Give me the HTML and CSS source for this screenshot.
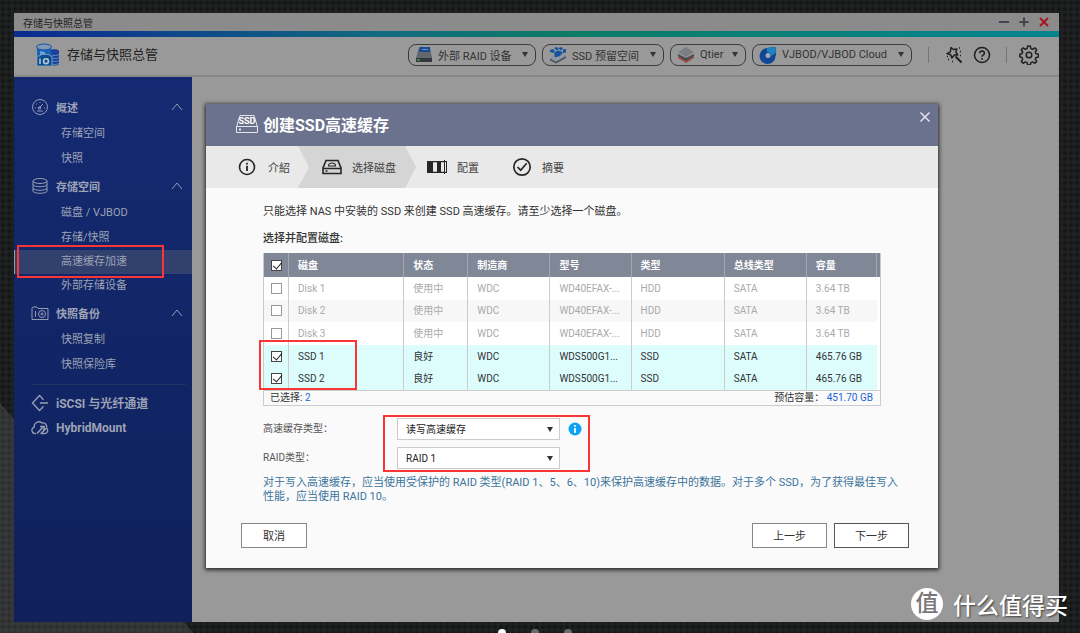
FILE: index.html
```html
<!DOCTYPE html>
<html lang="zh-CN">
<head>
<meta charset="utf-8">
<meta name="viewport" content="width=device-width, initial-scale=1">
<title>存储与快照总管</title>
<link rel="stylesheet" href="styles.css">
</head>
<body>
<div class="window">
  <div class="titlebar">
    <span class="titlebar-name">存储与快照总管</span>
    <button class="win-btn" aria-label="最小化"><svg width="10" height="10" viewBox="0 0 10 10"><path d="M0 5h10" stroke="#42454f" stroke-width="2"/></svg></button>
    <button class="win-btn" aria-label="最大化"><svg width="10" height="10" viewBox="0 0 10 10"><path d="M0.500 5h9M5 .5v9" stroke="#42454f" stroke-width="2"/></svg></button>
    <button class="win-btn" aria-label="关闭"><svg width="10" height="10" viewBox="0 0 10 10"><path d="M1 1l8 8M9 1L1 9" stroke="#a81420" stroke-width="2"/></svg></button>
  </div>
  <div class="stripe"></div>
  <header class="header">
    <svg class="app-logo" width="24" height="24" viewBox="0 0 24 24">
      <path d="M13 8c0-2.500 10-2.500 10 0v13c0 2-10 2-10 0z" fill="#1c3f9c"/>
      <path d="M16 12c3 .8 5 .5 7-.5M16 15c3 .8 5 .5 7-.5M16 18c3 .8 5 .5 7-.5M16 21c3 .8 5 .5 7-.5" stroke="#5d8fc4" fill="none"/>
      <path d="M1 4v9h14V4z" fill="#1763b8"/>
      <path d="M4 8v4h5V9z" fill="#6aa3cf"/>
      <ellipse cx="8" cy="4" rx="7.500" ry="3" fill="#8099b4" stroke="#1650ae"/>
      <path d="M1 13h3l1-1.500h8l1 1.500h2v10H1z" fill="#084f91" stroke="#8fa6ba" stroke-width=".8"/>
      <path d="M4 15.500v5.500" stroke="#b9c6d2" stroke-width="1.500"/><circle cx="10" cy="18.200" r="2.400" fill="none" stroke="#b9c6d2" stroke-width="1.600"/>
    </svg>
    <h1 class="app-name">存储与快照总管</h1>
    <nav class="tools">
      <button class="pill pill-raid">
        <svg width="18" height="18" viewBox="0 0 18 18"><path d="M4 1h11l2 11H1z" fill="#60676f"/><path d="M5 1h10v5H4z" fill="#174c94"/><path d="M7 3.500h6" stroke="#6d91ba"/><path d="M1 12h16v4H1z" fill="#33383e"/><path d="M2 14h3" stroke="#3a9a3d" stroke-width="1.500"/></svg>
        <span>外部 RAID 设备</span><i class="caret"></i></button>
      <button class="pill pill-ssd">
        <svg width="18" height="18" viewBox="0 0 18 18"><path d="M1 12.500l9-5 7 2.500v2l-10 5.500-6-3z" fill="#4b5661"/><path d="M1 12.500l9-5 7 2.500-10 5.500z" fill="#8f99a3"/><path d="M1 4l3-1 2 2-2 2-3-1zM5 2l3-1 2 2-2 1.500zM9.500 2l3-1 1.500 2-2.500 1.500zM14 3.500l3-.5v3.500l-3 .5zM5 6.500l4-2 5 1.500-3 4-5 1.500z" fill="#1254a0"/></svg>
        <span>SSD 预留空间</span><i class="caret"></i></button>
      <button class="pill pill-qtier">
        <svg width="18" height="18" viewBox="0 0 18 18"><path d="M1 10l8 4 8-4v2l-8 5-8-5z" fill="#a04d42"/><path d="M1 8l8 4 8-4v2l-8 5-8-5z" fill="#464b50"/><path d="M9 1l8 5-8 5-8-5z" fill="#7b7e82"/></svg>
        <span>Qtier</span><i class="caret"></i></button>
      <button class="pill pill-vjbod">
        <svg width="18" height="18" viewBox="0 0 18 18"><path d="M17 1c0 3 .5 6-.5 9.500A8 8 0 1 1 9 2c3-1 5-1 8-1z" fill="#124596"/><path d="M8 2.300C11 1 14 1 17 1c0 2-.2 4-.3 6l-4.700 3c0-3-2-4-4-4z" fill="#1d83bc"/><circle cx="9" cy="9.500" r="2.500" fill="#a0a8b0"/></svg>
        <span>VJBOD/VJBOD Cloud</span><i class="caret"></i></button>
      <span class="sep"></span>
      <button class="tool" aria-label="工具"><svg width="18" height="18" viewBox="0 0 18 18" fill="none" stroke="#1f1f1f" stroke-width="1.500" stroke-linejoin="round"><path d="M6 1.500l2.500 2 3.300-.6-.9 3.200 1.800 2.900-3.500.1-2.300 2.900-1.200-3.300L2 7.600l3.300-1.800z"/><path d="M10.500 10.500l6 6" stroke-width="2"/><path d="M14 2h1M15 5.500h1M15 9.500h1M3 13.500h1M7 15.500h1M2 10.500h1"/></svg></button>
      <button class="tool" aria-label="帮助"><svg width="18" height="18" viewBox="0 0 18 18" fill="none" stroke="#1f1f1f" stroke-width="1.500"><circle cx="9" cy="9" r="7.500"/><path d="M6.700 7.200c0-3 4.700-3 4.700 0 0 1.700-2.400 1.700-2.400 3.600M9 12v1.700"/></svg></button>
      <span class="sep"></span>
      <button class="tool tool-gear" aria-label="设置"><svg width="20" height="20" viewBox="0 0 20 20" fill="none" stroke="#1f1f1f" stroke-width="1.500" stroke-linejoin="round"><circle cx="10" cy="10" r="2.800"/><path d="M8.700 1h2.600l.6 2.600 1.700.7 2.200-1.400 1.900 1.900-1.400 2.200.7 1.700 2.500.6v2.600l-2.500.6-.7 1.700 1.400 2.200-1.900 1.900-2.200-1.400-1.700.7-.6 2.500H8.700l-.6-2.500-1.700-.7-2.200 1.400-1.900-1.900 1.400-2.200-.7-1.700L.8 11.900V9.300L3 8.700 3.700 7 2.300 4.800l1.900-1.900 2.200 1.400 1.700-.7z"/></svg></button>
    </nav>
  </header>
  <div class="body">
    <aside class="sidebar">
      <a class="group" href="#"><svg width="18" height="18" viewBox="0 0 18 18"><circle cx="9" cy="9" r="7.500"/><path d="M8 10l4-4M4 10h1M5 6h1M9 4v1M13 10h1M6 13h6"/><circle cx="8.500" cy="10" r="1.200"/></svg><span>概述</span><svg class="chev" width="12" height="8" viewBox="0 0 12 8"><path d="M1 7l5-6 5 6"/></svg></a>
      <a class="item" href="#">存储空间</a>
      <a class="item" href="#">快照</a>
      <a class="group" href="#"><svg width="18" height="18" viewBox="0 0 18 18"><ellipse cx="9" cy="4" rx="7" ry="2.500"/><path d="M2 4v10c0 3 14 3 14 0V4M2 7.500c0 3 14 3 14 0M2 11c0 3 14 3 14 0"/></svg><span>存储空间</span><svg class="chev" width="12" height="8" viewBox="0 0 12 8"><path d="M1 7l5-6 5 6"/></svg></a>
      <a class="item" href="#">磁盘 / VJBOD</a>
      <a class="item" href="#">存储/快照</a>
      <a class="item item-active" href="#">高速缓存加速<span class="mark mark-side"></span></a>
      <a class="item" href="#">外部存储设备</a>
      <a class="group" href="#"><svg width="18" height="18" viewBox="0 0 18 18"><path d="M1 4.500L2 3h4l1 1.500h10v11H1zM4.500 7v6"/><circle cx="11" cy="10" r="3.500"/><circle cx="11" cy="10" r="1"/></svg><span>快照备份</span><svg class="chev" width="12" height="8" viewBox="0 0 12 8"><path d="M1 7l5-6 5 6"/></svg></a>
      <a class="item" href="#">快照复制</a>
      <a class="item" href="#">快照保险库</a>
      <hr class="rule">
      <a class="group group-flat" href="#"><svg width="18" height="18" viewBox="0 0 18 18"><path d="M12 5L8.500 1.500 1.500 9l7 7.500L12 13M9 9h8M12 5v1M12 12v1" stroke-width="1.400"/></svg><span class="latin">iSCSI 与光纤通道</span></a>
      <a class="group group-flat" href="#"><svg width="18" height="18" viewBox="0 0 18 18"><path d="M5 14.500C0 15 0 9 3 8.500 3 3 8 1.500 11 4c4-1 5 3 4.500 5 2 2 1.500 5.500-2 5.500H9.500" stroke-width="1.300"/><path d="M6 14.500L12 8M9 7.500h4v4M10 14.500l5-5" stroke-width="1.600"/></svg><span class="latin">HybridMount</span></a>
    </aside>
    <main class="main">
      <section class="dialog" role="dialog" aria-labelledby="dlg-title">
        <div class="dialog-head">
          <svg width="22" height="20" viewBox="0 0 22 20" fill="none" stroke="#e4e6ee" stroke-width="1"><path d="M4 1.500h14L21.500 13v5.500H.5V13zM.5 12.500h21"/><path d="M3 15.500h2" stroke-width="2"/><text class="ssd-tag" x="11" y="10" text-anchor="middle">SSD</text></svg>
          <h2 id="dlg-title">创建SSD高速缓存</h2>
          <button class="dialog-close" aria-label="关闭"><svg width="10" height="10" viewBox="0 0 10 10"><path d="M.5.5l9 9M9.500.5l-9 9" stroke="#eceef4" stroke-width="1.300"/></svg></button>
        </div>
        <ol class="steps">
          <li class="step step-intro"><svg width="18" height="18" viewBox="0 0 18 18" fill="none" stroke="#262626" stroke-width="1.600"><circle cx="9" cy="9" r="7.500"/><path d="M9 7.800V13M9 4.800v1.600" stroke-width="1.800"/></svg><span>介紹</span></li>
          <li class="step step-current"><svg width="20" height="16" viewBox="0 0 20 16" fill="none" stroke="#262626" stroke-width="1.600"><path d="M4 1.500h12l3 7.500v5.500H1V9zM1 9.500h18"/><path d="M6.500 7c0-4 7-4 7 0z" stroke-width="1.200"/><path d="M3.500 12h2"/></svg><span>选择磁盘</span></li>
          <li class="step step-config"><svg width="20" height="14" viewBox="0 0 20 14"><path d="M0 1h6v12H0z" fill="#262626"/><path d="M6 1.700h11M6 12.300h11" stroke="#262626" stroke-width="1.200"/><path d="M10 1h4v12h-4z" fill="#262626"/><path d="M17.500 0v14M19.500 1.500v11M17 1.500h3M17 12.500h3" stroke="#262626" stroke-width="1"/></svg><span>配置</span></li>
          <li class="step step-sum"><svg width="20" height="20" viewBox="0 0 20 20" fill="none" stroke="#262626" stroke-width="1.700"><circle cx="10" cy="10" r="8.200"/><path d="M5.500 10l3.200 3.200 6-7"/></svg><span>摘要</span></li>
        </ol>
        <div class="dialog-body">
          <p class="lead">只能选择 NAS 中安装的 SSD 来创建 SSD 高速缓存。请至少选择一个磁盘。</p>
          <h3 class="sub">选择并配置磁盘:</h3>
          <div class="grid">
            <table class="disks">
              <colgroup><col class="c-check"><col class="c-disk"><col class="c-state"><col class="c-maker"><col class="c-model"><col class="c-type"><col class="c-bus"><col class="c-size"><col class="c-end"></colgroup>
              <thead><tr><th><input type="checkbox" class="tick" aria-label="全选" checked></th><th>磁盘</th><th>状态</th><th>制造商</th><th>型号</th><th>类型</th><th>总线类型</th><th>容量</th><th></th></tr></thead>
              <tbody>
                <tr class="off"><td><input type="checkbox" class="tick" aria-label="Disk 1"></td><td>Disk 1</td><td>使用中</td><td>WDC</td><td>WD40EFAX-...</td><td>HDD</td><td>SATA</td><td>3.64 TB</td><td></td></tr>
                <tr class="off alt"><td><input type="checkbox" class="tick" aria-label="Disk 2"></td><td>Disk 2</td><td>使用中</td><td>WDC</td><td>WD40EFAX-...</td><td>HDD</td><td>SATA</td><td>3.64 TB</td><td></td></tr>
                <tr class="off"><td><input type="checkbox" class="tick" aria-label="Disk 3"></td><td>Disk 3</td><td>使用中</td><td>WDC</td><td>WD40EFAX-...</td><td>HDD</td><td>SATA</td><td>3.64 TB</td><td></td></tr>
                <tr class="on"><td><input type="checkbox" class="tick" aria-label="SSD 1" checked></td><td>SSD 1</td><td>良好</td><td>WDC</td><td>WDS500G1...</td><td>SSD</td><td>SATA</td><td>465.76 GB</td><td></td></tr>
                <tr class="on"><td><input type="checkbox" class="tick" aria-label="SSD 2" checked></td><td>SSD 2</td><td>良好</td><td>WDC</td><td>WDS500G1...</td><td>SSD</td><td>SATA</td><td>465.76 GB</td><td></td></tr>
              </tbody>
            </table>
            <div class="totals"><span>已选择: <b>2</b></span><span>预估容量： <b>451.70 GB</b></span></div>
            <span class="mark mark-table"></span>
          </div>
          <div class="form">
            <label for="cache-type">高速缓存类型：</label>
            <span class="select"><select id="cache-type"><option>读写高速缓存</option></select><i class="caret"></i></span>
            <button class="info" aria-label="信息"><svg width="14" height="14" viewBox="0 0 14 14"><circle cx="7" cy="7" r="6.500" fill="#0ba4f5"/><path d="M7 6v5M7 3v1.800" stroke="#fff" stroke-width="1.800"/></svg></button>
            <label for="raid-type">RAID类型：</label>
            <span class="select"><select id="raid-type"><option>RAID 1</option></select><i class="caret"></i></span>
            <span class="mark mark-form"></span>
          </div>
          <p class="note">对于写入高速缓存，应当使用受保护的 RAID 类型(RAID 1、5、6、10)来保护高速缓存中的数据。对于多个 SSD，为了获得最佳写入<br>性能，应当使用 RAID 10。</p>
        </div>
        <div class="dialog-foot">
          <button class="btn btn-cancel">取消</button>
          <button class="btn">上一步</button>
          <button class="btn btn-next">下一步</button>
        </div>
      </section>
    </main>
  </div>
</div>
<div class="dots"><i class="dot dot-on"></i><i class="dot"></i><i class="dot"></i></div>
<div class="brand"><span class="brand-seal">值</span><span>什么值得买</span></div>
</body>
</html>
```
FILE: styles.css
```css
* { box-sizing: border-box; }
body {
  margin: 0;
  min-height: 100vh;
  padding: 13px 21px 0 14px;
  display: flex;
  flex-direction: column;
  position: relative;
  overflow: hidden;
  font-family: Roboto, "Noto Sans CJK SC", sans-serif;
  font-size: 11px;
  color: #333;
  background:
    linear-gradient(50deg, rgba(255,255,255,.1) 0, rgba(255,255,255,.1) 12%, transparent 12%),
    radial-gradient(circle, #141516 1px, rgba(20,21,22,0) 3px) 0 0 / 6px 6px,
    #202223;
}
button { margin: 0; padding: 0; border: 0; background: none; font: inherit; color: inherit; cursor: pointer; }
h1, h2, h3, p, ol { margin: 0; padding: 0; }
svg { display: block; flex: none; }
a { color: inherit; text-decoration: none; }

.window { flex: 1; display: flex; flex-direction: column; background: #999; }
.titlebar { height: 18px; display: flex; align-items: center; gap: 10px; padding: 0 10px 0 9px; background: #8b8b8b; }
.titlebar-name { flex: 1; font-size: 10px; color: #222; }
.win-btn { width: 10px; height: 10px; }
.stripe { height: 6px; background: linear-gradient(90deg, #0b2b91, #126a80 35%, #0d7b66 53%, #088078 72%, #01848f); }
.header { height: 40px; display: flex; align-items: center; padding: 0 20px 3px 22px; border-bottom: 2px solid #878787; }
.app-name { margin-left: 7px; padding-bottom: 2px; font-size: 13px; font-weight: 400; color: #222; }
.tools { margin-left: auto; display: flex; align-items: center; }
.pill { height: 22px; display: flex; align-items: center; padding: 0 7px 0 6px; margin-right: 6px; border: 1px solid #3c3c3c; border-radius: 8px; font-size: 11px; color: #333; white-space: nowrap; }
.pill span { flex: 1; margin-left: 5px; text-align: left; }
.pill-raid { width: 128px; }
.pill-ssd { width: 122px; }
.pill-qtier { width: 76px; }
.pill-vjbod { width: 160px; margin-right: 16px; }
.caret { width: 0; height: 0; border: 3px solid transparent; border-top: 5px solid #333; border-bottom: 0; }
.sep { width: 1px; height: 16px; background: #77776b; }
.tool { margin-left: 16px; }
.tool + .tool { margin-left: 10px; }
.tool + .sep { margin-left: 15px; }
.tool-gear { margin-left: 12px; }

.body { flex: 1; display: flex; }
.sidebar { width: 178px; padding-top: 15px; background: linear-gradient(#142a72, #0f205a); color: #9da3b5; }
.group { height: 29px; display: flex; align-items: center; padding: 0 9px 0 17px; font-weight: 700; }
.group span { flex: 1; margin-left: 7px; }
.group svg, .chev { fill: none; stroke: #959cb3; stroke-width: 1; }
.group-flat { height: 25px; }
.group .latin { font-size: 12px; }
.item { display: block; position: relative; height: 24px; line-height: 24px; padding-left: 47px; }
.group + .item { height: 26px; line-height: 26px; }
.item-active { background: #32406e; box-shadow: inset 1px 0 #999; }
.rule { height: 1px; margin: 7px 6px 5px 17px; border: 0; background: #233360; }
.main { flex: 1; min-width: 0; padding: 27px 121px 54px 14px; }

.mark { position: absolute; border: 2px solid #f93535; pointer-events: none; }
.mark-side { left: 3px; top: -5px; width: 147px; height: 33px; }
.mark-table { left: -5px; bottom: 15px; width: 98px; height: 50px; }
.mark-form { left: 120px; top: -3px; width: 207px; height: 57px; }

.dialog { background: #fafafa; box-shadow: 0 1px 4px 1px rgba(0,0,0,.75); }
.dialog-head { height: 42px; display: flex; align-items: center; padding: 0 8px 2px 30px; background: #6b728e; color: #fff; }
.dialog-head h2 { flex: 1; margin-left: 5px; font-size: 16px; font-weight: 700; }
.ssd-tag { font: 700 9px Roboto, sans-serif; fill: #fff; stroke: none; }
.dialog-close { align-self: flex-start; margin-top: 8px; }
.steps { display: flex; height: 42px; list-style: none; background: #e9e9e9; color: #444; }
.step { display: flex; align-items: center; gap: 10px; white-space: nowrap; }
.step-intro { width: 92px; padding-left: 32px; gap: 12px; }
.step-current { padding: 0 20px 0 24px; background: #d5d5d5; clip-path: polygon(0 0, calc(100% - 11px) 0, 100% 50%, calc(100% - 11px) 100%, 0 100%, 11px 50%); }
.step-config { padding-left: 11px; }
.step-sum { padding-left: 33px; }

.dialog-body { padding: 15px 57px 0; }
.lead { line-height: 18px; }
.sub { margin-top: 9px; line-height: 18px; font-size: 11px; font-weight: 500; }
.grid { position: relative; margin-top: 5px; border: 1px solid #ccc; border-top: 0; font-size: 10px; background: #fff; }
.disks { width: 100%; height: 137px; table-layout: fixed; border-collapse: separate; border-spacing: 0; line-height: 14px; }
.disks th, .disks td { padding: 1px 0 0 9px; text-align: left; border-right: 1px solid #ccc; white-space: nowrap; overflow: hidden; }
.disks th { height: 24px; background: #808796; color: #fff; font-weight: 700; border-color: #a2a8b3; }
.disks td:last-child, .disks th:last-child { padding: 0; border: 0; }
.disks td:nth-last-child(2) { border: 0; }
.disks th:first-child, .disks td:first-child { padding: 0 0 0 7px; }
.c-check { width: 25px; }
.c-disk { width: 115px; }
.c-state { width: 64px; }
.c-maker { width: 82px; }
.c-model { width: 81px; }
.c-type { width: 93px; }
.c-bus { width: 82px; }
.c-size { width: 70px; }
.c-end { width: 3px; }
.off { color: #aaa; }
.alt td { background: #f7f7f7; }
.on td { background: #ddfdfd; }
.alt td:last-child, .on td:last-child { background: #fff; }
.tick { appearance: none; display: block; width: 11px; height: 11px; margin: 0; border: 1px solid #999; background: #fff; }
.tick:checked { border-color: #444; }
.tick:checked::after { content: ""; display: block; width: 4px; height: 8px; margin: -1px 0 0 3px; border: solid #222; border-width: 0 1px 1px 0; transform: rotate(40deg); }
.totals { display: flex; justify-content: space-between; height: 15px; line-height: 14px; padding: 0 7px 0 6px; border-top: 1px solid #ccc; background: #fafafa; }
.totals b { font-weight: 400; color: #1a66d9; }

.form { position: relative; display: grid; grid-template-columns: 134px 163px 1fr; row-gap: 7px; align-items: center; margin-top: 12px; font-size: 10px; color: #555; }
.form label { grid-column: 1; padding-bottom: 3px; }
.select { position: relative; display: block; }
.select select { display: block; appearance: none; width: 100%; height: 22px; padding: 0 8px; border: 1px solid #ccc; border-radius: 0; background: #fff; font: inherit; color: #222; }
.select .caret { position: absolute; right: 7px; top: 9px; pointer-events: none; }
.info { margin-left: 8px; justify-self: start; }
.note { margin: 7px -30px 0 0; line-height: 14px; color: #3a749c; }

.dialog-foot { display: flex; gap: 7px; padding: 19px 29px 20px 35px; }
.btn { width: 75px; height: 25px; padding-bottom: 2px; border: 1px solid #888; background: #fff; font-size: 11px; color: #333; }
.btn-cancel { width: 66px; margin-right: auto; }
.btn-next { border-color: #555; }

.dots { display: flex; justify-content: center; gap: 25px; height: 11px; padding: 7px 4px 0 0; overflow: hidden; }
.dot { flex: none; width: 8px; height: 8px; border-radius: 50%; background: #6b6b6b; }
.dot-on { background: #fff; }
.brand { position: absolute; right: 12px; bottom: 12px; display: flex; align-items: center; gap: 10px; height: 34px; font-size: 23px; font-weight: 500; color: #fff; text-shadow: 1px 1px 2px rgba(0,0,0,.6); }
.brand-seal { width: 32px; height: 32px; border-radius: 50%; background: #fff; color: #777; text-align: center; line-height: 31px; text-shadow: none; }
```
